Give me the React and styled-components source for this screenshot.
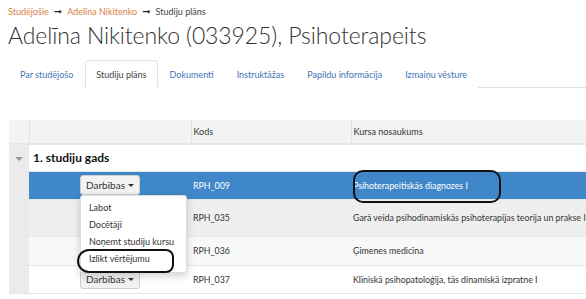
import styled, { createGlobalStyle } from "styled-components";

const GlobalStyle = createGlobalStyle`
  html, body {
    margin: 0;
    padding: 0;
    background: #ffffff;
    overflow: hidden;
  }
  body {
    font-family: Lato, "Open Sans", sans-serif;
    color: #333333;
  }
`;

const Page = styled.div`
  width: 586px;
  height: 299px;
  overflow: hidden;
  padding: 6px 0 0 8px;
  box-sizing: border-box;
`;

// 상단 경로
const Breadcrumb = styled.div`
  display: flex;
  align-items: center;
  gap: 5px;
  font-size: 9px;
  line-height: 12px;
  color: #444;
`;

const Crumb = styled.a`
  color: #d9803f;
  text-decoration: none;
`;

const Arrow = styled.span`
  font-family: "DejaVu Sans", sans-serif;
  font-size: 10px;
  color: #222;
`;

const Title = styled.h1`
  margin: 2px 0 0;
  font-size: 23px;
  font-weight: 300;
  letter-spacing: -0.1px;
  line-height: 30px;
  color: #333;
  white-space: nowrap;
`;

// 탭 목록
const Tabs = styled.ul`
  display: flex;
  list-style: none;
  margin: 10px 0 0 1px;
  padding: 0;
  border-bottom: 1px solid #e2e2e2;
  width: 700px;
`;

const Tab = styled.li`
  height: 26px;
  padding: 0 10px;
  margin-right: 1px;
  margin-bottom: -1px;
  display: flex;
  align-items: center;
  font-size: 9px;
  color: ${(props) => (props.$active ? "#444" : "#4274b8")};
  background: #fff;
  border: 1px solid ${(props) => (props.$active ? "#e2e2e2" : "transparent")};
  border-bottom-color: ${(props) => (props.$active ? "#fff" : "transparent")};
  border-radius: 4px 4px 0 0;
`;

// 표
const Table = styled.table`
  margin: 32px 0 0 1px;
  border-collapse: collapse;
  table-layout: fixed;
  width: 760px;
  font-size: 8.8px;
`;

const HeadCell = styled.th`
  height: 23px;
  padding: 0 2px;
  text-align: left;
  font-weight: 400;
  font-size: 9px;
  color: #333;
  background: #f3f3f3;
  border-left: 1px solid #e2e2e2;
  border-bottom: 2px solid #e6e6e6;
  &:first-child {
    border-left: none;
  }
`;

const Row = styled.tr`
  height: ${(props) => props.$height}px;
  background: ${(props) => props.$bg};
  color: ${(props) => (props.$selected ? "#ffffff" : "#333")};
  border-bottom: 1px solid #e6e6e6;
`;

const SideCell = styled.td`
  background: #ebebeb;
  padding: 0;
  text-align: center;
`;

const Caret = styled.span`
  display: inline-block;
  width: 0;
  height: 0;
  border-left: 4px solid transparent;
  border-right: 4px solid transparent;
  border-top: 4px solid #9a9a9a;
`;

const GroupCell = styled.td`
  padding: 0 4px;
  font-size: 12px;
  font-weight: 700;
  color: #111;
  background: #fff;
`;

const ActionCell = styled.td`
  text-align: center;
  padding: 0;
`;

const Cell = styled.td`
  padding: 0 2px;
  position: relative;
  white-space: nowrap;
`;

const Actions = styled.div`
  display: inline-block;
  position: relative;
  vertical-align: middle;
`;

const ActionButton = styled.button`
  width: 60px;
  height: 20px;
  padding: 0;
  font-family: inherit;
  font-size: 10px;
  color: #333;
  background: #f2f2f2;
  border: 1px solid #cfcfcf;
  border-radius: 3px;
  display: flex;
  align-items: center;
  justify-content: center;
  gap: 3px;
`;

const SmallCaret = styled.span`
  display: inline-block;
  border-left: 3px solid transparent;
  border-right: 3px solid transparent;
  border-top: 3px solid #333;
`;

const Menu = styled.ul`
  position: absolute;
  z-index: 5;
  top: 20px;
  left: 0;
  width: 107px;
  margin: 0;
  padding: 3px 0 5px;
  list-style: none;
  text-align: left;
  background: #fff;
  border: 1px solid #dcdcdc;
  border-radius: 3px;
  box-shadow: 0 3px 8px rgba(0, 0, 0, 0.18);
  box-sizing: border-box;
`;

const MenuItem = styled.li`
  position: relative;
  height: 17px;
  line-height: 17px;
  padding: 0 8px;
  font-size: 9px;
  color: #333;
  white-space: nowrap;
`;

// 손으로 그린 강조 테두리
const Mark = styled.span`
  position: absolute;
  left: ${(props) => props.$left}px;
  top: ${(props) => props.$top}px;
  width: ${(props) => props.$width}px;
  height: ${(props) => props.$height}px;
  border: 2px solid #111;
  border-radius: ${(props) => props.$radius};
  box-sizing: border-box;
  pointer-events: none;
`;

const tabs = [
  "Par studējošo",
  "Studiju plāns",
  "Dokumenti",
  "Instruktāžas",
  "Papildu informācija",
  "Izmaiņu vēsture",
];

const courses = [
  { code: "RPH_009", name: "Psihoterapeitiskās diagnozes I", height: 28, bg: "#3f87c9", selected: true, menu: true },
  { code: "RPH_035", name: "Garā veida psihodinamiskās psihoterapijas teorija un prakse I", height: 37, bg: "#efefef", covered: true },
  { code: "RPH_036", name: "Ģimenes medicīna", height: 29, bg: "#f9f9f9", covered: true },
  { code: "RPH_037", name: "Klīniskā psihopatoloģija, tās dinamiskā izpratne I", height: 28, bg: "#ffffff" },
];

function App() {
  return (
    <>
      <GlobalStyle />
      <Page>
        <Breadcrumb>
          <Crumb>Studējošie</Crumb>
          <Arrow>➞</Arrow>
          <Crumb>Adelīna Nikitenko</Crumb>
          <Arrow>➞</Arrow>
          <span>Studiju plāns</span>
        </Breadcrumb>
        <Title>Adelīna Nikitenko (033925), Psihoterapeits</Title>
        <Tabs>
          {tabs.map((t) => (
            <Tab key={t} $active={t === "Studiju plāns"}>
              {t}
            </Tab>
          ))}
        </Tabs>
        <Table>
          <colgroup>
            <col style={{ width: 20 }} />
            <col style={{ width: 162 }} />
            <col style={{ width: 160 }} />
            <col />
          </colgroup>
          <thead>
            <tr>
              <HeadCell />
              <HeadCell />
              <HeadCell>Kods</HeadCell>
              <HeadCell>Kursa nosaukums</HeadCell>
            </tr>
          </thead>
          <tbody>
            <Row $height={27} $bg="#fff">
              <SideCell>
                <Caret />
              </SideCell>
              <GroupCell colSpan={3}>1. studiju gads</GroupCell>
            </Row>
            {courses.map((c) => (
              <Row key={c.code} $height={c.height} $bg={c.bg} $selected={c.selected}>
                <SideCell />
                <ActionCell>
                  {!c.covered && (
                    <Actions>
                      <ActionButton>
                        Darbības <SmallCaret />
                      </ActionButton>
                      {c.menu && (
                        <Menu>
                          <MenuItem>Labot</MenuItem>
                          <MenuItem>Docētāji</MenuItem>
                          <MenuItem>Noņemt studiju kursu</MenuItem>
                          <MenuItem>
                            Izlikt vērtējumu
                            <Mark $left={-4} $top={-1} $width={97} $height={24} $radius="12px 8px 8px 12px" />
                          </MenuItem>
                        </Menu>
                      )}
                    </Actions>
                  )}
                </ActionCell>
                <Cell>{c.code}</Cell>
                <Cell>
                  {c.name}
                  {c.selected && (
                    <Mark $left={2} $top={-2} $width={148} $height={33} $radius="10px" />
                  )}
                </Cell>
              </Row>
            ))}
          </tbody>
        </Table>
      </Page>
    </>
  );
}

export default App;
